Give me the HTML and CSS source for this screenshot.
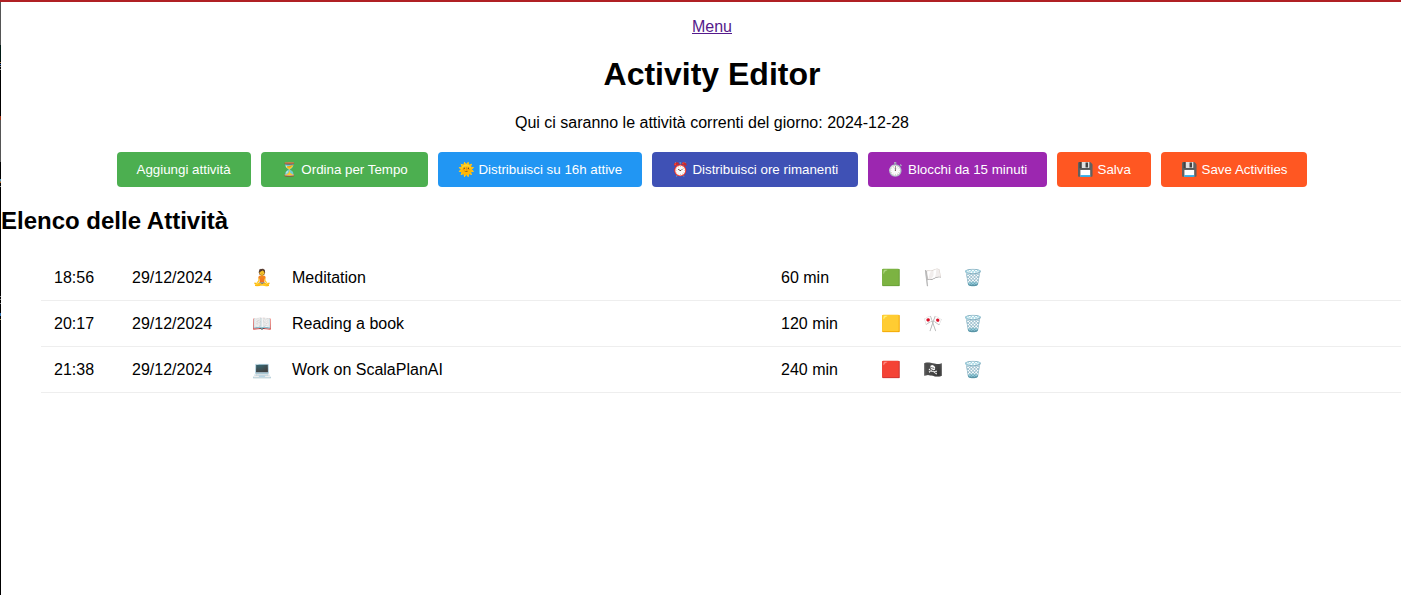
FILE: index.html
```html
<!DOCTYPE html>
<html lang="it">
<head>
<meta charset="utf-8">
<title>Activity Editor</title>
<link rel="stylesheet" href="styles.css">
</head>
<body>
<div class="window">
  <div class="edge"></div>
  <main class="page">
    <header class="header">
      <a class="menu-link" href="#">Menu</a>
      <h1 class="title">Activity Editor</h1>
      <p class="intro">Qui ci saranno le attività correnti del giorno: 2024-12-28</p>
      <div class="actions">
        <button class="btn green">Aggiungi attività</button>
        <button class="btn green">⏳ Ordina per Tempo</button>
        <button class="btn blue">🌞 Distribuisci su 16h attive</button>
        <button class="btn indigo">⏰ Distribuisci ore rimanenti</button>
        <button class="btn purple">⏱️ Blocchi da 15 minuti</button>
        <button class="btn orange">💾 Salva</button>
        <button class="btn orange">💾 Save Activities</button>
      </div>
    </header>
    <h2 class="list-title">Elenco delle Attività</h2>
    <ul class="activities">
      <li class="activity"><span>18:56</span><span>29/12/2024</span><span>🧘</span><span>Meditation</span><span>60 min</span><span>🟩</span><span>🏳️</span><span>🗑️</span></li>
      <li class="activity"><span>20:17</span><span>29/12/2024</span><span>📖</span><span>Reading a book</span><span>120 min</span><span>🟨</span><span>🎌</span><span>🗑️</span></li>
      <li class="activity"><span>21:38</span><span>29/12/2024</span><span>💻</span><span>Work on ScalaPlanAI</span><span>240 min</span><span>🟥</span><span>🏴‍☠️</span><span>🗑️</span></li>
    </ul>
  </main>
</div>
</body>
</html>
```
FILE: styles.css
```css
body {
  margin: 0;
  overflow: hidden;
  background: #fff;
  color: #000;
  font: 16px "Liberation Sans", Arial, sans-serif;
}

.window {
  display: flex;
  width: 1423px;
  height: 593px;
  border-top: 2px solid #b02024;
}

.edge {
  flex: 0 0 1px;
  background: linear-gradient(#555 43px, #001a14 43px 59px, #000 59px 60px, #9a7a50 60px 61px, #000 61px 62px, #4070c0 62px 63px, #000 63px 64px, #888 64px 65px, #000 65px 67px, #999 67px 68px, #000 68px 114px, #a03010 114px 118px, #555 118px 160px, #000 160px 177px, #60a0c0 177px 179px, #b06020 180px 181px, #000 181px 184px, #999 184px 185px, #000 185px 294px, #888 294px 295px, #000 295px 297px, #888 297px 298px, #000 298px 301px, #888 301px 302px, #000 302px 311px, #3070b0 311px 314px, #000 314px 317px, #a09060 317px 318px, #000 318px);
}

.page {
  flex: 1;
}

.header {
  display: flex;
  flex-direction: column;
  align-items: center;
  padding-top: 16px;
}

.menu-link {
  color: #551a8b;
  line-height: 18px;
}

.title {
  margin: 20px 0 0;
  font-size: 32px;
  line-height: 37px;
}

.intro {
  margin: 21px 0 0;
  line-height: 18px;
}

.actions {
  display: flex;
  gap: 10px;
  margin-top: 20px;
}

.btn {
  height: 35px;
  padding: 0 20px;
  border: 0;
  border-radius: 4px;
  color: #fff;
  font: 13.3333px "Liberation Sans", Arial, sans-serif;
  white-space: nowrap;
}

.green { background: #4caf50; }
.blue { background: #2196f3; }
.indigo { background: #3f51b5; }
.purple { background: #9c27b0; }
.orange { background: #ff5722; }

.indigo,
.purple {
  padding: 0 19.5px;
}

.list-title {
  margin: 20px 0;
  font-size: 24px;
  line-height: 27px;
}

.activities {
  margin: 0;
  padding: 1px 0 0 40px;
  list-style: none;
}

.activity {
  display: grid;
  grid-template-columns: 78px 120px 40px 489px 100px 42px 40px 1fr;
  align-items: center;
  height: 45px;
  padding-left: 13px;
  border-bottom: 1px solid #eee;
  white-space: nowrap;
}
```
